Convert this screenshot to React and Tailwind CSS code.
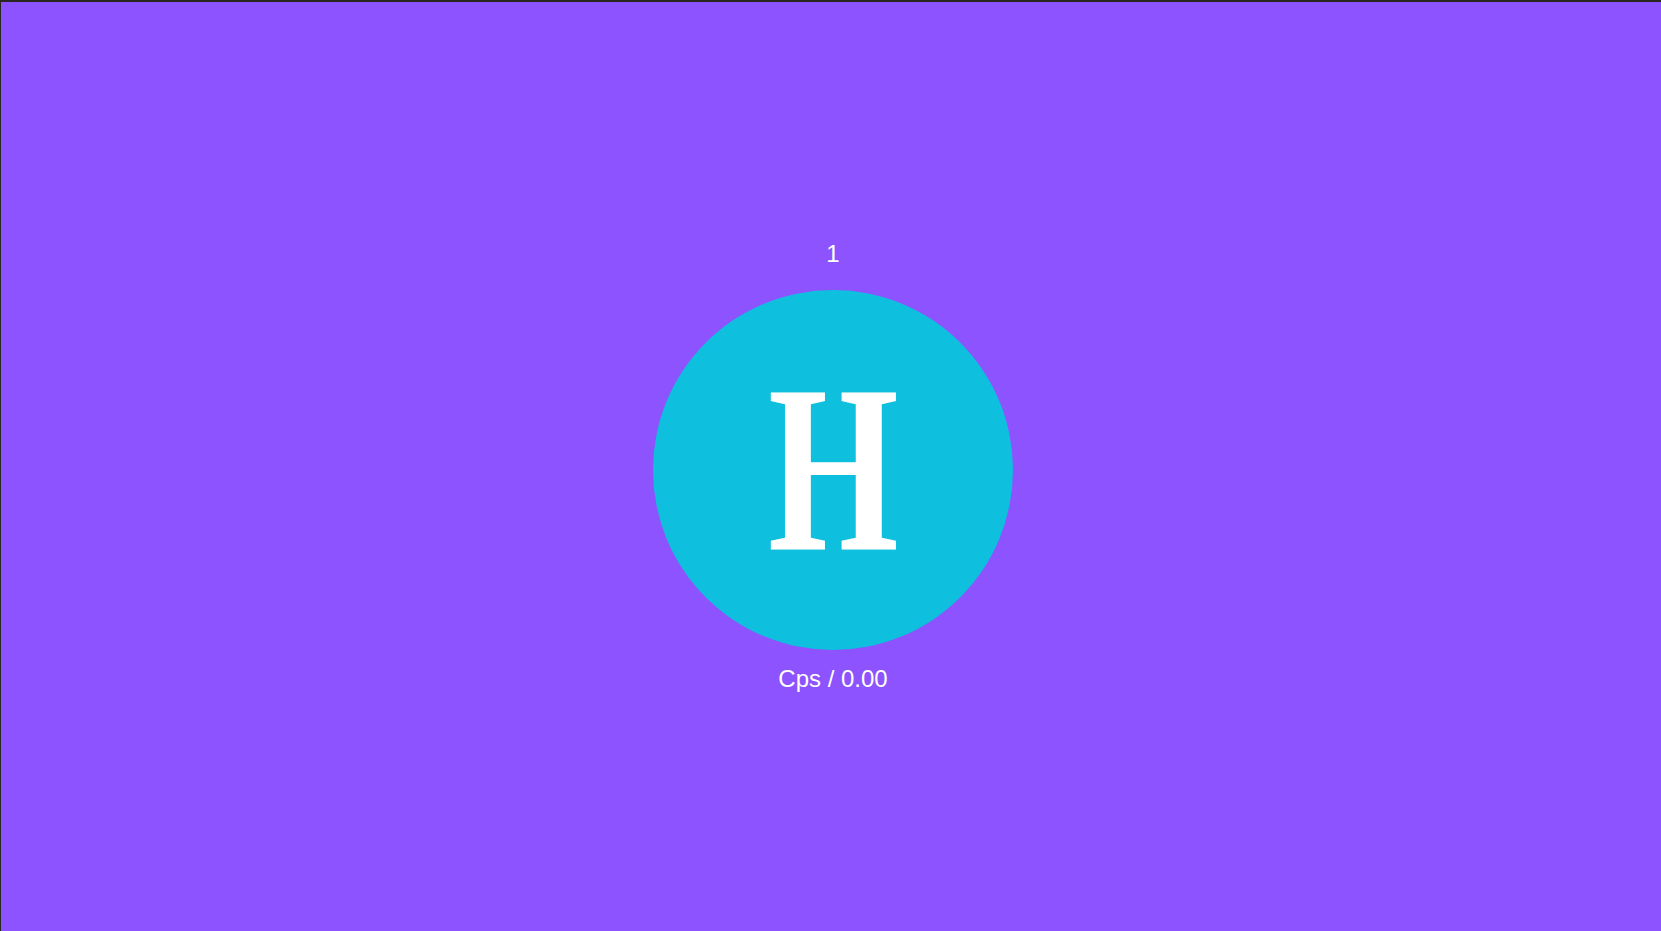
const App = () => {
  return (
    <div
      className="h-screen w-full bg-[#8c53fe] border-t-2 border-l border-[#2a2622] flex flex-col items-center justify-center text-white"
      style={{ fontFamily: '"Liberation Sans", Arial, sans-serif' }}
    >
      <div className="ml-[4px] flex flex-col items-center">
        <p className="text-[24px] leading-[28px]">1</p>
        <button className="mt-[22px] w-[360px] h-[360px] rounded-full bg-[#0ec0de] flex items-center justify-center">
          <span
            className="text-[240px] font-bold leading-none text-white scale-x-[0.7] -translate-y-[2px]"
            style={{ fontFamily: '"Liberation Serif", "Times New Roman", serif' }}
          >
            H
          </span>
        </button>
        <p className="mt-[15px] text-[24px] leading-[28px]">Cps / 0.00</p>
      </div>
    </div>
  );
};

export default App;
